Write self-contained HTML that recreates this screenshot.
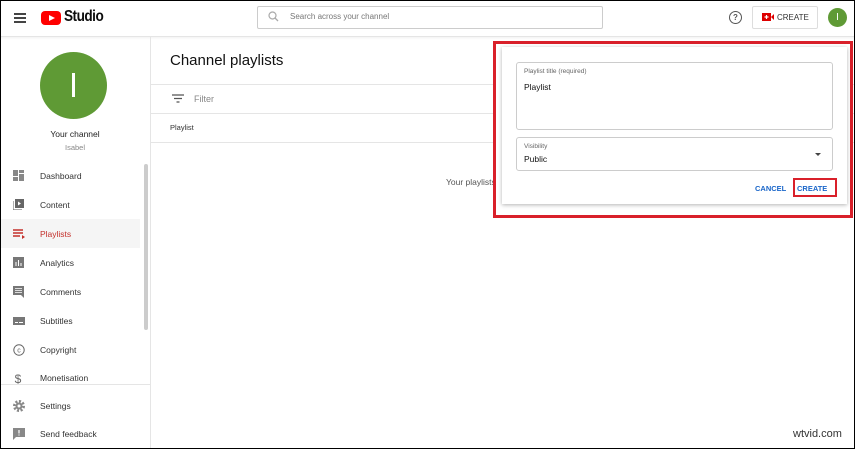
<!DOCTYPE html><html><head><style>
*{box-sizing:border-box;margin:0;padding:0}
body{width:855px;height:449px;overflow:hidden;font-family:"Liberation Sans",sans-serif;background:#fff;position:relative;color:#0d0d0d}
.frame{position:absolute;left:0;top:0;width:855px;height:449px;border:1px solid #000;pointer-events:none;z-index:9}
.hdr{position:absolute;left:0;top:0;width:855px;height:37px;border-bottom:1px solid #e5e5e5;box-shadow:0 1px 2px rgba(0,0,0,.06)}
.side{position:absolute;left:0;top:37px;width:151px;height:412px;border-right:1px solid #e5e5e5}
.nav{position:absolute;left:0;width:140px;height:29px;font-size:8.5px;color:#333;display:flex;align-items:center}
.nav span{position:absolute;left:40px}
.nav svg{position:absolute;left:13px;top:9px}
.abs{position:absolute}
</style></head><body>
<div class="hdr">
 <div class="abs" style="left:14px;top:13px;width:12px;height:2px;background:#444;box-shadow:0 4px 0 #444,0 8px 0 #444"></div>
 <div class="abs" style="left:41px;top:11px;width:20px;height:14px;background:#f00;border-radius:4px"></div>
 <div class="abs" style="left:49px;top:15px;width:0;height:0;border-left:6px solid #fff;border-top:3.5px solid transparent;border-bottom:3.5px solid transparent"></div>
 <div class="abs" style="left:64px;top:8px;font-size:16px;font-weight:bold;letter-spacing:-.6px;transform:scaleX(.85);transform-origin:left">Studio</div>
 <div class="abs" style="left:257px;top:6px;width:346px;height:23px;border:1px solid #ccc;border-radius:2px"></div>
 <svg class="abs" style="left:268px;top:11px" width="11" height="11"><circle cx="4.5" cy="4.5" r="3.5" fill="none" stroke="#aaa" stroke-width="1.2"/><path d="M7 7l3 3" stroke="#aaa" stroke-width="1.3"/></svg>
 <div class="abs" style="left:290px;top:12px;font-size:8px;color:#777">Search across your channel</div>
 <div class="abs" style="left:729px;top:11px;width:13px;height:13px;border:1.3px solid #555;border-radius:50%;font-size:8px;text-align:center;line-height:11px;color:#555;font-weight:bold">?</div>
 <div class="abs" style="left:752px;top:6px;width:66px;height:23px;border:1px solid #ddd;border-radius:2px"></div>
 <svg class="abs" style="left:762px;top:13px" width="12" height="8"><rect width="9" height="8" fill="#d00"/><path d="M9 4l3-3v6z" fill="#d00"/><path d="M4.5 2v4M2.5 4h4" stroke="#fff" stroke-width="1.2"/></svg>
 <div class="abs" style="left:777px;top:13px;font-size:8px;color:#333">CREATE</div>
 <div class="abs" style="left:828px;top:8px;width:19px;height:19px;border-radius:50%;background:#5f9a35;color:#fff;font-size:10px;text-align:center;line-height:19px">I</div>
</div>
<div class="side">
 <div class="abs" style="left:40px;top:15px;width:67px;height:67px;border-radius:50%;background:#5f9a35"></div>
 <div class="abs" style="left:72px;top:36px;width:3px;height:24px;background:#fff"></div>
 <div class="abs" style="left:0;width:150px;top:92px;text-align:center;font-size:8.5px;color:#222">Your channel</div>
 <div class="abs" style="left:0;width:150px;top:106px;text-align:center;font-size:7.5px;color:#888">Isabel</div>
 <div class="abs" style="left:144px;top:127px;width:4px;height:166px;background:#ccc;border-radius:2px"></div>
 <div class="abs" style="left:0;top:347px;width:150px;height:1px;background:#e5e5e5"></div>
</div>
<div class="nav" style="top:161px"><svg width="11" height="11"><path d="M0 0h5v6H0zM6 0h5v3H6zM6 4h5v7H6zM0 7h5v4H0z" fill="#888"/></svg><span>Dashboard</span></div>
<div class="nav" style="top:190px"><svg width="11" height="11"><path d="M0 2v9h9" fill="none" stroke="#777" stroke-width="1.2"/><rect x="2" y="0" width="9" height="9" fill="#666"/><path d="M5 2.5v4l3-2z" fill="#fff"/></svg><span>Content</span></div>
<div class="nav" style="top:219px;background:#f5f5f5"><svg width="12" height="11"><path d="M0 2h10M0 5h10M0 8h7" stroke="#c4302b" stroke-width="1.4"/><path d="M9 7v4l3-2z" fill="#c4302b"/></svg><span style="color:#c4302b">Playlists</span></div>
<div class="nav" style="top:248px"><svg width="11" height="11"><rect width="11" height="11" fill="#777"/><path d="M3 5v4M5.5 3v6M8 6v3" stroke="#fff" stroke-width="1"/></svg><span>Analytics</span></div>
<div class="nav" style="top:277px"><svg width="11" height="12"><path d="M0 0h11v12l-3-3H0z" fill="#777"/><path d="M2 2.5h7M2 4.5h7M2 6.5h7" stroke="#fff" stroke-width=".8"/></svg><span>Comments</span></div>
<div class="nav" style="top:306px"><svg width="12" height="11" style="top:10px"><rect y="1" width="12" height="8" fill="#777"/><path d="M2 6.5h3M6 6.5h4" stroke="#fff" stroke-width="1"/></svg><span>Subtitles</span></div>
<div class="nav" style="top:335px"><svg width="12" height="12"><circle cx="6" cy="6" r="5.2" fill="none" stroke="#666" stroke-width="1"/><text x="6" y="8.5" font-size="7" text-anchor="middle" fill="#666" font-family="Liberation Sans">c</text></svg><span>Copyright</span></div>
<div class="nav" style="top:363px"><svg width="12" height="12"><text x="5" y="11" font-size="12" text-anchor="middle" fill="#666" font-family="Liberation Sans">$</text></svg><span>Monetisation</span></div>
<div class="nav" style="top:391px"><svg width="12" height="12"><circle cx="6" cy="6" r="4.5" fill="none" stroke="#888" stroke-width="3" stroke-dasharray="2 1.5"/><circle cx="6" cy="6" r="3.5" fill="#888"/><circle cx="6" cy="6" r="1.5" fill="#fff"/></svg><span>Settings</span></div>
<div class="nav" style="top:419px"><svg width="12" height="12"><path d="M0 0h12v9H3l-3 3z" fill="#888"/><path d="M6 2v3.5M6 6.5v1" stroke="#fff" stroke-width="1.2"/></svg><span>Send feedback</span></div>
<div class="abs" style="left:170px;top:52px;font-size:15px;color:#111">Channel playlists</div>
<div class="abs" style="left:151px;top:84px;width:704px;height:1px;background:#e5e5e5"></div>
<svg class="abs" style="left:172px;top:94px" width="12" height="9"><path d="M0 1h12M2 4.5h8M4.5 8h3" stroke="#555" stroke-width="1.3"/></svg>
<div class="abs" style="left:194px;top:94px;font-size:9px;color:#888">Filter</div>
<div class="abs" style="left:151px;top:113px;width:704px;height:1px;background:#e5e5e5"></div>
<div class="abs" style="left:170px;top:123px;font-size:7.5px;color:#333">Playlist</div>
<div class="abs" style="left:151px;top:142px;width:704px;height:1px;background:#e5e5e5"></div>
<div class="abs" style="left:446px;top:177px;font-size:8.5px;color:#555">Your playlists</div>
<div class="abs" style="left:493px;top:41px;width:360px;height:177px;border:3px solid #d9202a;background:#fff"></div>
<div class="abs" style="left:502px;top:47px;width:345px;height:157px;background:#fff;box-shadow:0 1px 4px rgba(0,0,0,.3)"></div>
<div class="abs" style="left:516px;top:62px;width:317px;height:68px;border:1px solid #ccc;border-radius:3px"></div>
<div class="abs" style="left:524px;top:68px;font-size:6.5px;color:#666">Playlist title (required)</div>
<div class="abs" style="left:524px;top:82px;font-size:8.5px;color:#111">Playlist</div>
<div class="abs" style="left:516px;top:137px;width:317px;height:34px;border:1px solid #ccc;border-radius:3px"></div>
<div class="abs" style="left:524px;top:143px;font-size:6.5px;color:#666">Visibility</div>
<div class="abs" style="left:524px;top:154px;font-size:8.5px;color:#111">Public</div>
<div class="abs" style="left:815px;top:153px;border-left:3px solid transparent;border-right:3px solid transparent;border-top:3px solid #444"></div>
<div class="abs" style="left:755px;top:184px;font-size:7.5px;color:#1a66c9;font-weight:bold">CANCEL</div>
<div class="abs" style="left:793px;top:178px;width:44px;height:19px;border:2px solid #d9202a"></div>
<div class="abs" style="left:797px;top:184px;font-size:7.5px;color:#1a66c9;font-weight:bold">CREATE</div>
<div class="abs" style="left:793px;top:428px;font-size:11px;color:#333">wtvid.com</div>
<div class="frame"></div>
</body></html>
